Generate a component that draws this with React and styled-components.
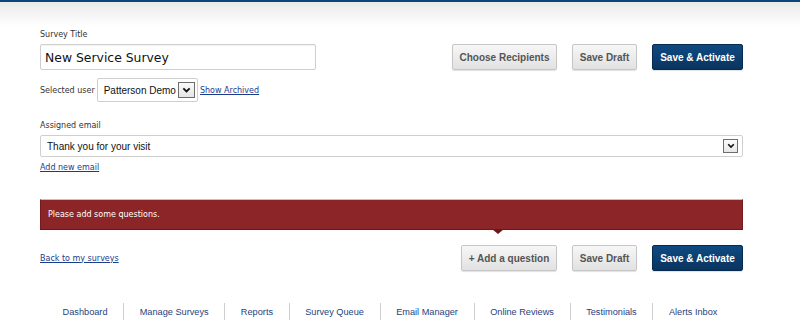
import React from "react";
import styled, { createGlobalStyle } from "styled-components";

const Global = createGlobalStyle`
  html, body { margin: 0; padding: 0; background: #fff; }
  body { font-family: "DejaVu Sans", Verdana, sans-serif; }
`;

const Header = styled.div`
  height: 24px;
  border-top: 2px solid #0b4677;
  background: linear-gradient(#e9e9e9, #ffffff);
`;

const Page = styled.div`
  padding: 3px 57px 0 40px;
`;

const Label = styled.div`
  font-family: "DejaVu Sans", Verdana, sans-serif;
  font-size: 8px;
  line-height: 12px;
  color: #333;
  margin-bottom: ${(p) => p.$mb || 3}px;
`;

const TopRow = styled.div`
  display: flex;
  justify-content: space-between;
  align-items: flex-start;
`;

const Col = styled.div`
  display: flex;
  flex-direction: column;
`;

const TitleInput = styled.div`
  width: 266px;
  height: 24px;
  border: 1px solid #cfcfcf;
  border-radius: 2px;
  box-shadow: inset 0 1px 1px rgba(0, 0, 0, 0.05);
  padding: 0 4px;
  display: flex;
  align-items: center;
  font-family: "DejaVu Sans", Verdana, sans-serif;
  font-size: 12.4px;
  color: #111;
`;

const UserRow = styled.div`
  display: flex;
  align-items: center;
  gap: 2px;
  margin-top: 8px;
`;

const InlineLabel = styled.span`
  font-size: 8px;
  color: #333;
`;

const SelectBox = styled.div`
  display: flex;
  align-items: center;
  justify-content: space-between;
  box-sizing: border-box;
  width: ${(p) => p.$w || "auto"};
  height: ${(p) => p.$h}px;
  border: 1px solid #cfcfcf;
  border-radius: 2px;
  background: #fff;
  padding: 0 ${(p) => p.$pr}px 0 6px;
  font-family: "Liberation Sans", Arial, sans-serif;
  font-size: 10px;
  color: #111;
  gap: 2px;
`;

const ArrowBox = styled.span`
  box-sizing: border-box;
  width: ${(p) => p.$s}px;
  height: ${(p) => p.$s - 1}px;
  border: 1px solid #6d6d6d;
  background: linear-gradient(#fbfbfb, #e6e6e6);
  display: flex;
  align-items: center;
  justify-content: center;
  flex: none;
`;

const Link = styled.a`
  font-family: "DejaVu Sans", Verdana, sans-serif;
  font-size: 8px;
  color: #1b3c8c;
  text-decoration: underline;
  cursor: pointer;
`;

const Buttons = styled.div`
  display: flex;
  gap: 15px;
  margin-top: ${(p) => p.$mt || 0}px;
`;

const Button = styled.button`
  box-sizing: border-box;
  height: 26px;
  width: ${(p) => p.$w}px;
  padding: 0;
  border-radius: 2px;
  font-family: "Liberation Sans", Arial, sans-serif;
  font-weight: bold;
  font-size: 10px;
  cursor: pointer;
  border: 1px solid ${(p) => (p.$primary ? "#062a50" : "#c6c6c6")};
  color: ${(p) => (p.$primary ? "#fff" : "#555")};
  background: ${(p) =>
    p.$primary
      ? "linear-gradient(#0f4a82, #0a345f)"
      : "linear-gradient(#f7f7f7, #e1e1e1)"};
  box-shadow: 0 1px 1px rgba(0, 0, 0, 0.12);
`;

const EmailSection = styled.div`
  margin-top: 18px;
`;

const LinkLine = styled.div`
  margin-top: 2px;
  line-height: 12px;
`;

const Banner = styled.div`
  position: relative;
  margin-top: 25px;
  box-sizing: border-box;
  height: 31px;
  background: #8b2527;
  border-top: 1px solid #cdbdbd;
  border-left: 1px solid #751c1e;
  border-right: 1px solid #751c1e;
  border-bottom: 1px solid #6c1719;
  display: flex;
  align-items: center;
  padding-left: 7px;
  font-family: "DejaVu Sans", Verdana, sans-serif;
  font-size: 8px;
  color: #fff;
`;

const BannerArrow = styled.span`
  position: absolute;
  left: 451px;
  top: 100%;
  width: 0;
  height: 0;
  border-left: 6px solid transparent;
  border-right: 6px solid transparent;
  border-top: 5px solid #6c1719;
`;

const BottomRow = styled.div`
  display: flex;
  justify-content: space-between;
  align-items: center;
  margin-top: 15px;
`;

const Footer = styled.nav`
  display: flex;
  justify-content: center;
  margin-top: 32px;
  padding-right: 3px;
`;

const NavItem = styled.a`
  font-family: "Liberation Sans", Arial, sans-serif;
  font-size: 9.2px;
  color: #273f80;
  padding: 0 ${(p) => p.$pad}px;
  height: 17px;
  display: flex;
  align-items: center;
  border-left: ${(p) => (p.$first ? "none" : "1px solid #cfcfcf")};
  text-decoration: none;
  cursor: pointer;
`;

const Chevron = ({ size = 9 }) => (
  <svg width={size} height={size * 0.7} viewBox="0 0 10 7">
    <path d="M1.5 1.5 L5 5 L8.5 1.5" fill="none" stroke="#111" strokeWidth="2" />
  </svg>
);

const navItems = [
  "Dashboard",
  "Manage Surveys",
  "Reports",
  "Survey Queue",
  "Email Manager",
  "Online Reviews",
  "Testimonials",
  "Alerts Inbox",
];

export default function App() {
  return (
    <>
      <Global />
      <Header />
      <Page>
        <TopRow>
          <Col>
            <Label>Survey Title</Label>
            <TitleInput>New Service Survey</TitleInput>
            <UserRow>
              <InlineLabel>Selected user</InlineLabel>
              <SelectBox $h={24} $pr={2}>
                Patterson Demo
                <ArrowBox $s={17}>
                  <Chevron size={9} />
                </ArrowBox>
              </SelectBox>
              <Link>Show Archived</Link>
            </UserRow>
          </Col>
          <Buttons $mt={15}>
            <Button $w={105}>Choose Recipients</Button>
            <Button $w={65}>Save Draft</Button>
            <Button $w={91} $primary>Save &amp; Activate</Button>
          </Buttons>
        </TopRow>

        <EmailSection>
          <Label $mb={3}>Assigned email</Label>
          <SelectBox $h={22} $w="100%" $pr={4}>
            Thank you for your visit
            <ArrowBox $s={15}>
              <Chevron size={8} />
            </ArrowBox>
          </SelectBox>
          <LinkLine>
            <Link>Add new email</Link>
          </LinkLine>
        </EmailSection>

        <Banner>
          Please add some questions.
          <BannerArrow />
        </Banner>

        <BottomRow>
          <Link>Back to my surveys</Link>
          <Buttons>
            <Button $w={96}>+ Add a question</Button>
            <Button $w={65}>Save Draft</Button>
            <Button $w={91} $primary>Save &amp; Activate</Button>
          </Buttons>
        </BottomRow>

        <Footer>
          {navItems.map((n, i) => (
            <NavItem key={n} $first={i === 0} $pad={15.6}>
              {n}
            </NavItem>
          ))}
        </Footer>
      </Page>
    </>
  );
}
